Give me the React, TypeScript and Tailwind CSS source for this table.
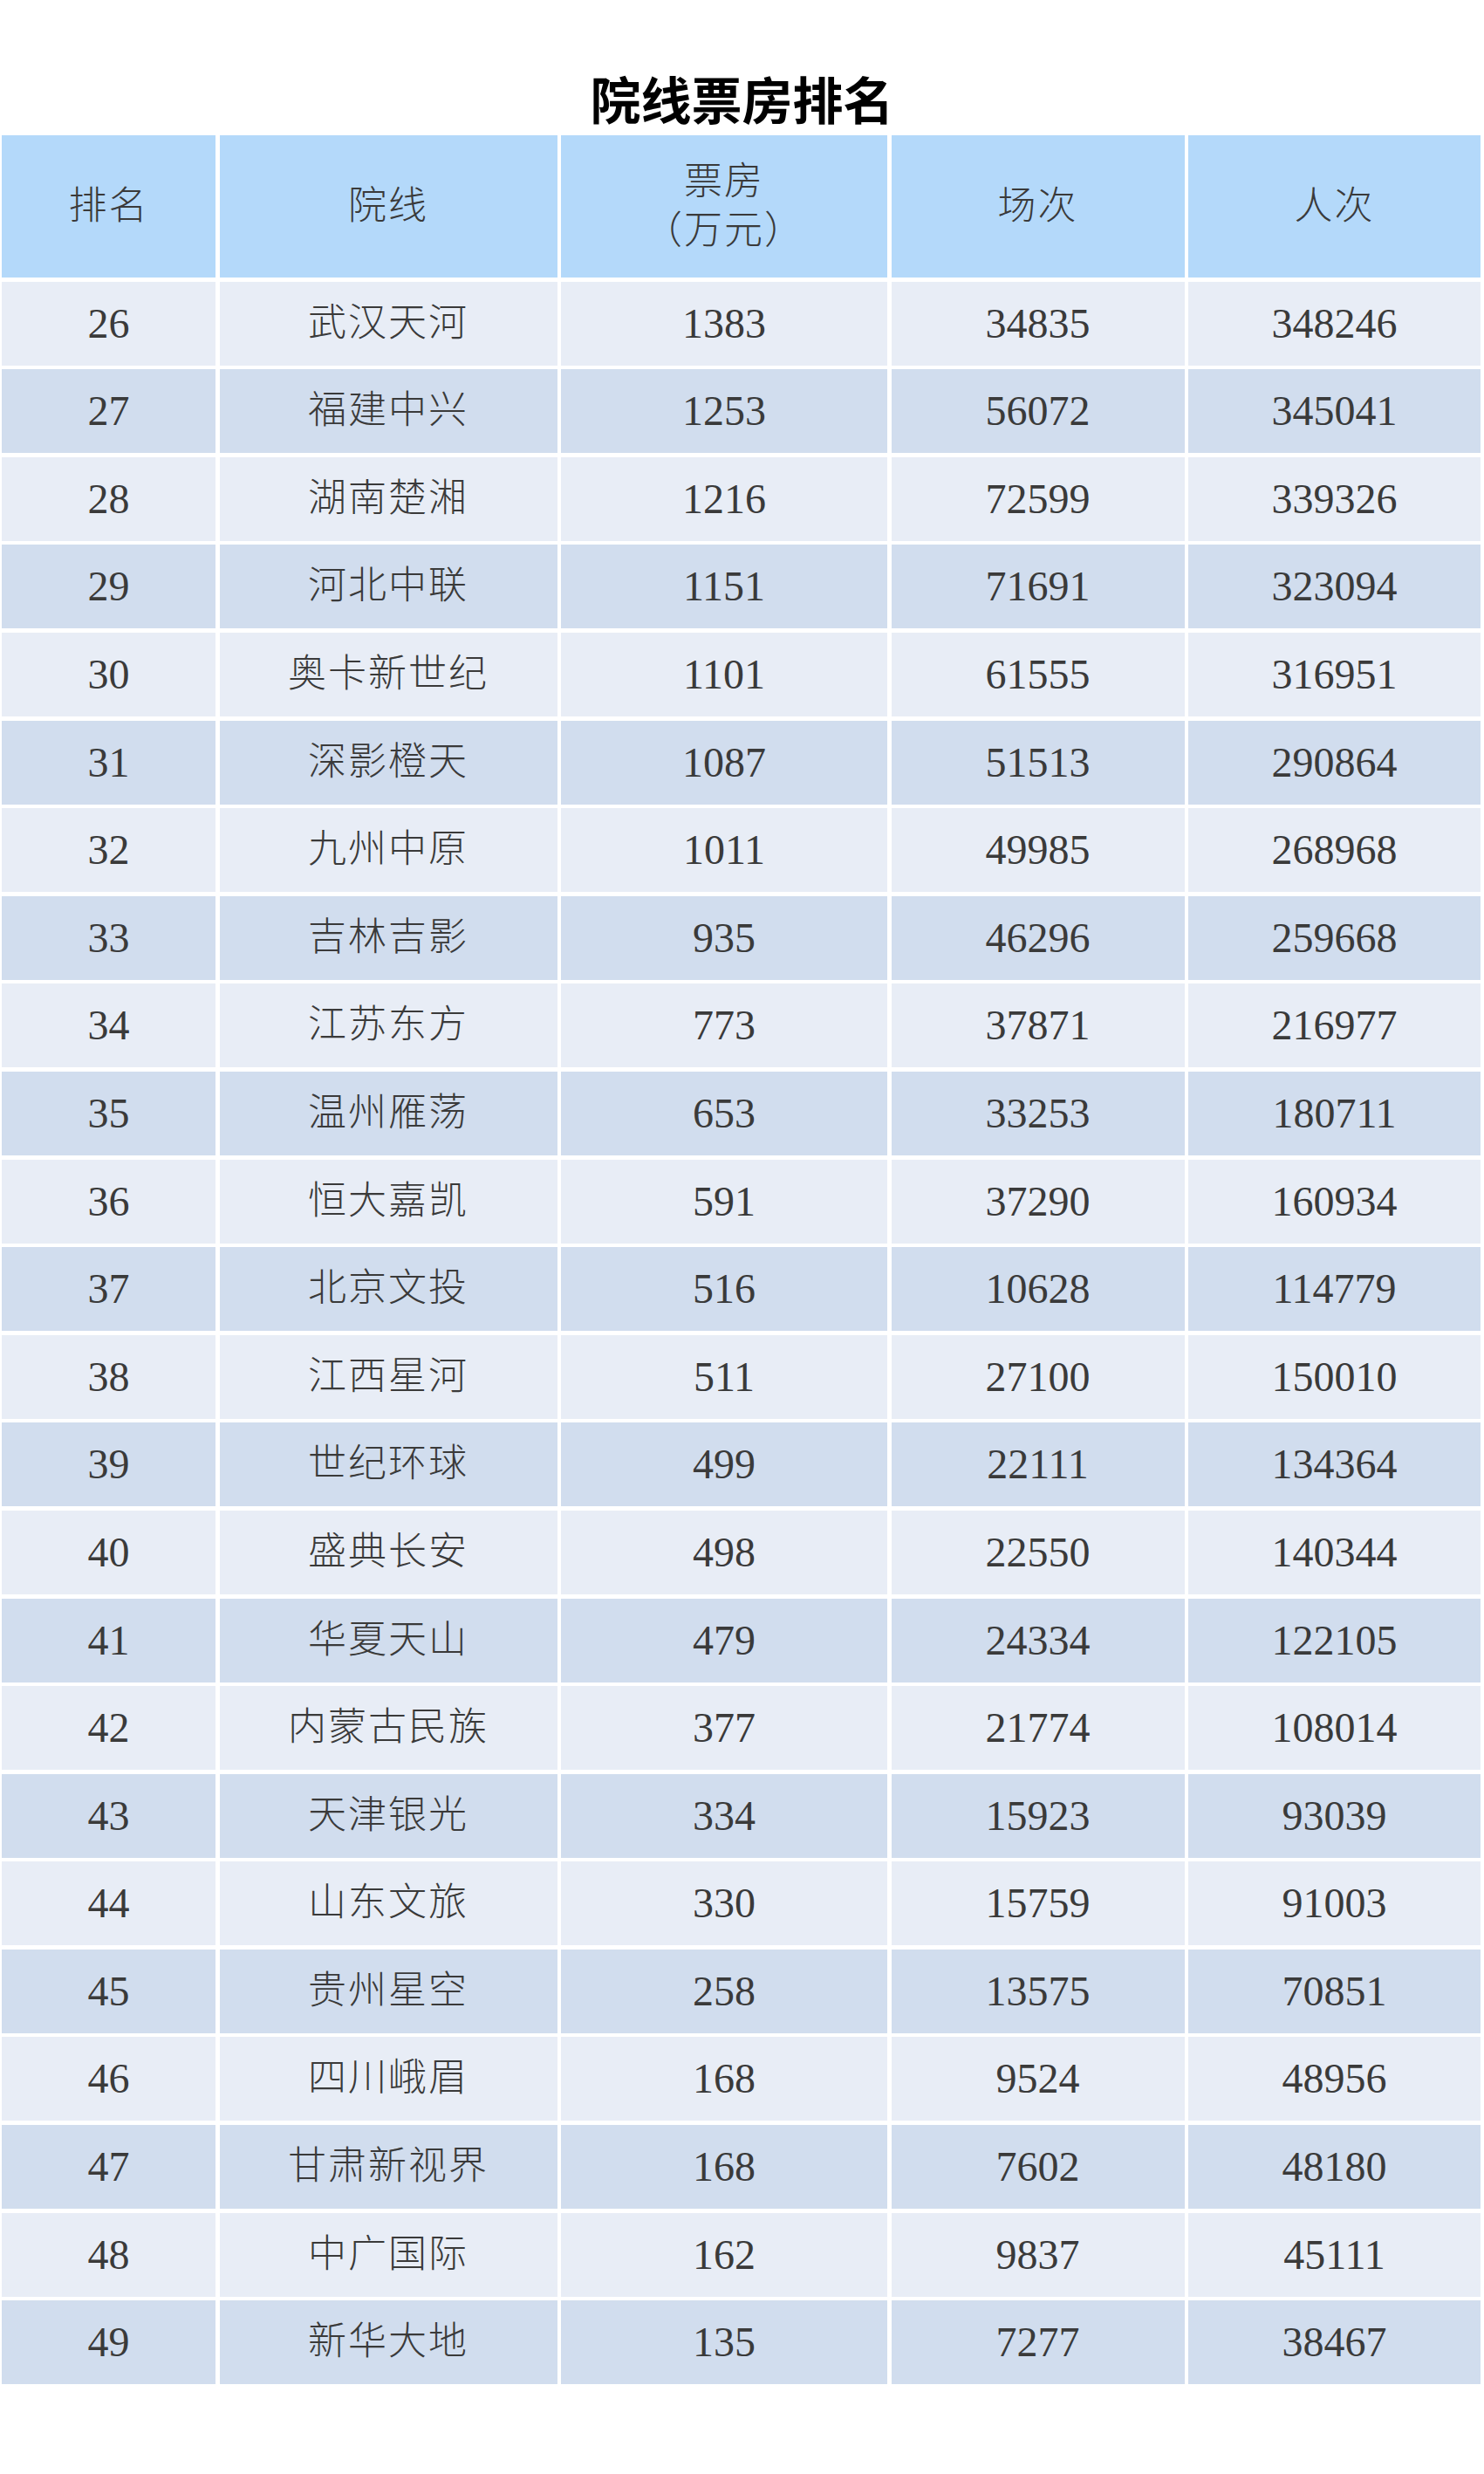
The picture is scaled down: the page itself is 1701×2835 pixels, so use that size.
const rows: [number, string, number, number, number][] = [
  [26, "武汉天河", 1383, 34835, 348246],
  [27, "福建中兴", 1253, 56072, 345041],
  [28, "湖南楚湘", 1216, 72599, 339326],
  [29, "河北中联", 1151, 71691, 323094],
  [30, "奥卡新世纪", 1101, 61555, 316951],
  [31, "深影橙天", 1087, 51513, 290864],
  [32, "九州中原", 1011, 49985, 268968],
  [33, "吉林吉影", 935, 46296, 259668],
  [34, "江苏东方", 773, 37871, 216977],
  [35, "温州雁荡", 653, 33253, 180711],
  [36, "恒大嘉凯", 591, 37290, 160934],
  [37, "北京文投", 516, 10628, 114779],
  [38, "江西星河", 511, 27100, 150010],
  [39, "世纪环球", 499, 22111, 134364],
  [40, "盛典长安", 498, 22550, 140344],
  [41, "华夏天山", 479, 24334, 122105],
  [42, "内蒙古民族", 377, 21774, 108014],
  [43, "天津银光", 334, 15923, 93039],
  [44, "山东文旅", 330, 15759, 91003],
  [45, "贵州星空", 258, 13575, 70851],
  [46, "四川峨眉", 168, 9524, 48956],
  [47, "甘肃新视界", 168, 7602, 48180],
  [48, "中广国际", 162, 9837, 45111],
  [49, "新华大地", 135, 7277, 38467],
];

const cellFont = { fontFamily: '"Liberation Serif", "Noto Sans CJK SC", serif' };

export default function App() {
  return (
    <div className="min-h-screen bg-white">
      {/* Title */}
      <div className="h-[155px] flex items-end justify-center pb-[14px]">
        <h1
          className="text-[58px] leading-none font-bold text-black"
          style={{ fontFamily: '"Noto Sans CJK SC", sans-serif' }}
        >
          院线票房排名
        </h1>
      </div>

      {/* Table */}
      <div
        className="ml-[2px] grid grid-cols-[245px_387px_374px_336px_335px] gap-x-[4.5px] gap-y-[4.6px] text-[#3a3a3a]"
        style={cellFont}
      >
        <HeaderCell>排名</HeaderCell>
        <HeaderCell>院线</HeaderCell>
        <HeaderCell>
          <span className="block">票房</span>
          <span className="block mt-[12px]">（万元）</span>
        </HeaderCell>
        <HeaderCell>场次</HeaderCell>
        <HeaderCell>人次</HeaderCell>

        {rows.map((r, i) => {
          const bg = i % 2 === 0 ? "bg-[#e8edf6]" : "bg-[#d1ddee]";
          return [
            <NumCell key={`${r[0]}-a`} bg={bg}>{r[0]}</NumCell>,
            <div
              key={`${r[0]}-b`}
              className={`${bg} h-[96px] flex items-center justify-center text-[44px] tracking-[2px] font-light`}
            >
              {r[1]}
            </div>,
            <NumCell key={`${r[0]}-c`} bg={bg}>{r[2]}</NumCell>,
            <NumCell key={`${r[0]}-d`} bg={bg}>{r[3]}</NumCell>,
            <NumCell key={`${r[0]}-e`} bg={bg}>{r[4]}</NumCell>,
          ];
        })}
      </div>
    </div>
  );
}

function HeaderCell({ children }: { children: React.ReactNode }) {
  return (
    <div className="bg-[#b4d9fa] h-[163px] flex flex-col items-center justify-center text-[44px] leading-none tracking-[2px] font-light text-center">
      {children}
    </div>
  );
}

function NumCell({ bg, children }: { bg: string; children: React.ReactNode }) {
  return (
    <div className={`${bg} h-[96px] flex items-center justify-center text-[48px] leading-none`}>
      {children}
    </div>
  );
}
